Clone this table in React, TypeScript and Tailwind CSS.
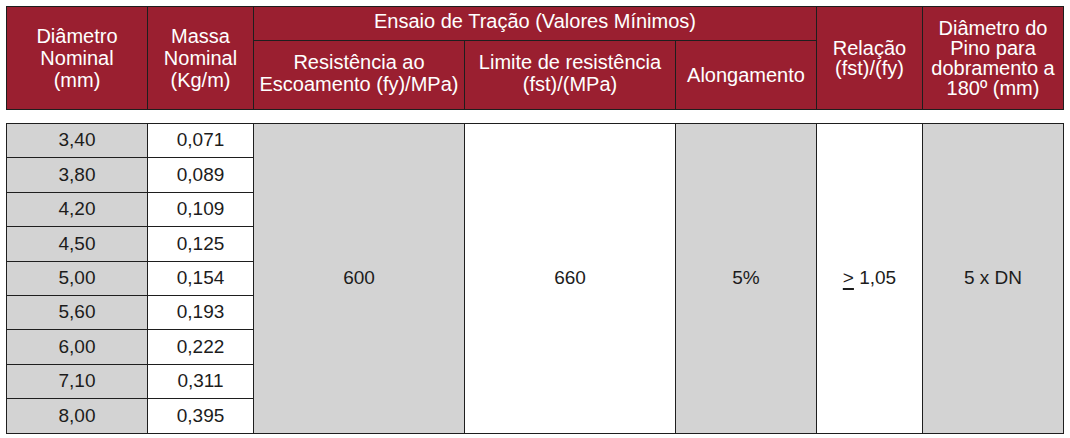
const cols = 'grid-cols-[140px_105px_210px_210px_140px_105px_140px]';

const rows = [
  ['3,40', '0,071'],
  ['3,80', '0,089'],
  ['4,20', '0,109'],
  ['4,50', '0,125'],
  ['5,00', '0,154'],
  ['5,60', '0,193'],
  ['6,00', '0,222'],
  ['7,10', '0,311'],
  ['8,00', '0,395'],
];

const head = 'bg-[#9a1f30] text-white flex items-center justify-center text-center text-[20px]';
const cell = 'flex items-center justify-center text-[19px] text-[#1c1c1c]';

export default function App() {
  return (
    <div className="bg-white w-[1070px] h-[438px] pt-[6px] pl-[6px]" style={{ fontFamily: '"Liberation Sans", Arial, sans-serif' }}>
      <div className={`grid ${cols} grid-rows-[33px_68px] gap-px p-px bg-[#1e1e1e] w-fit`}>
        <div className={`${head} row-span-2 leading-[22px]`}>
          Diâmetro<br />Nominal<br />(mm)
        </div>
        <div className={`${head} row-span-2 leading-[22px]`}>
          Massa<br />Nominal<br />(Kg/m)
        </div>
        <div className={`${head} col-span-3 pb-[6px]`}>Ensaio de Tração (Valores Mínimos)</div>
        <div className={`${head} row-span-2 leading-[20px]`}>
          Relação<br />(fst)/(fy)
        </div>
        <div className={`${head} row-span-2 leading-[20px]`}>
          Diâmetro do<br />Pino para<br />dobramento a<br />180º (mm)
        </div>
        <div className={`${head} leading-[22px] pb-[4px]`}>
          Resistência ao<br />Escoamento (fy)/MPa)
        </div>
        <div className={`${head} leading-[22px] pb-[4px]`}>
          Limite de resistência<br />(fst)/(MPa)
        </div>
        <div className={`${head}`}>Alongamento</div>
      </div>

      <div className={`mt-[13px] grid ${cols} grid-rows-[repeat(9,33.4px)] grid-flow-col gap-px p-px bg-[#1e1e1e] w-fit`}>
        {rows.map(([d]) => (
          <div key={d} className={`${cell} bg-[#d3d3d3]`}>{d}</div>
        ))}
        {rows.map(([d, m]) => (
          <div key={d + m} className={`${cell} bg-white`}>{m}</div>
        ))}
        <div className={`${cell} row-span-9 bg-[#d3d3d3]`}>600</div>
        <div className={`${cell} row-span-9 bg-white`}>660</div>
        <div className={`${cell} row-span-9 bg-[#d3d3d3]`}>5%</div>
        <div className={`${cell} row-span-9 bg-white`}>
          <span className="underline decoration-[2px] underline-offset-[4px]">&gt;</span>&nbsp;1,05
        </div>
        <div className={`${cell} row-span-9 bg-[#d3d3d3]`}>5 x DN</div>
      </div>
    </div>
  );
}
